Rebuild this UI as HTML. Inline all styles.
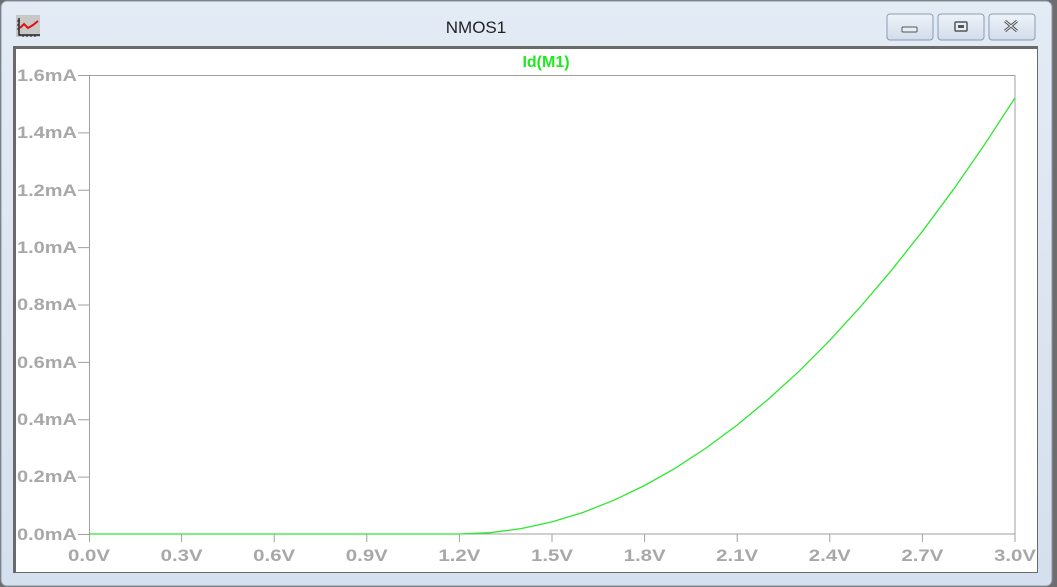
<!DOCTYPE html>
<html><head><meta charset="utf-8"><style>
html,body{margin:0;padding:0;width:1057px;height:587px;overflow:hidden;background:#fff}
</style></head><body>
<svg width="1057" height="587" xmlns="http://www.w3.org/2000/svg" style="display:block">
<defs><linearGradient id="tb" x1="0" y1="0" x2="0" y2="1"><stop offset="0" stop-color="#e3ebf5"/><stop offset="1" stop-color="#d4e0ee"/></linearGradient>
<linearGradient id="bt" x1="0" y1="0" x2="0" y2="1"><stop offset="0" stop-color="#eef3f9"/><stop offset="1" stop-color="#d2dceb"/></linearGradient></defs>
<rect x="0" y="0" width="1057" height="587" fill="#6d6d6d"/>
<rect x="1" y="1" width="1051" height="585" rx="6" fill="url(#tb)" stroke="#8a96a4"/>
<rect x="13" y="46" width="1025" height="527" fill="#6a6a6a"/>
<rect x="16" y="49" width="1021" height="523" fill="#fff"/>
<!-- icon -->
<rect x="16" y="15" width="24" height="22" fill="#c8c8c8"/>
<path d="M19 18v17h21" stroke="#222" stroke-width="1.5" fill="none"/>
<path d="M20 28l4-4 4 4 5-3 5-4" stroke="#e01010" stroke-width="2" fill="none"/>
<path d="M17 21h2M17 25h2M17 29h2M23 35v2M27 35v2M31 35v2M35 35v2" stroke="#222"/>
<text x="476" y="33" font-family="Liberation Sans,sans-serif" font-size="17" fill="#222" text-anchor="middle">NMOS1</text>
<!-- buttons -->
<g stroke="#8b9bb0" fill="url(#bt)">
<rect x="887" y="14" width="46" height="26" rx="3"/><rect x="938" y="14" width="46" height="26" rx="3"/><rect x="989" y="14" width="46" height="26" rx="3"/></g>
<rect x="902" y="27" width="15" height="5" rx="1" fill="#e8eef6" stroke="#555"/>
<rect x="955" y="22" width="12" height="9" rx="1" fill="#e8eef6" stroke="#555" stroke-width="1.5"/>
<rect x="958" y="25" width="6" height="3" fill="#555"/>
<path d="M1005 21l12 10M1017 21l-12 10" stroke="#555" stroke-width="3"/>
<path d="M1005 21l12 10M1017 21l-12 10" stroke="#e8eef6" stroke-width="1"/>
<text x="546" y="67" font-family="Liberation Sans,sans-serif" font-weight="bold" font-size="16" fill="#1ee81e" text-anchor="middle">Id(M1)</text>
<rect x="89.5" y="75.5" width="925.5" height="458.5" fill="none" stroke="#a0a0a0"/>
<g stroke="#a0a0a0">
<path d="M78 75.5h11M78 132.9h11M78 190.3h11M78 247.6h11M78 305h11M78 362.4h11M78 419.8h11M78 477.1h11M78 534.5h11"/>
<path d="M181.6 534v8M274.2 534v8M366.8 534v8M459.4 534v8M552 534v8M644.6 534v8M737.2 534v8M829.8 534v8M922.4 534v8M1015 534v8M89.5 534v8"/>
</g>
<g font-family="Liberation Sans,sans-serif" font-weight="bold" font-size="17" fill="#a8a8a8" lengthAdjust="spacingAndGlyphs">
<text x="17" y="81" textLength="60" lengthAdjust="spacingAndGlyphs">1.6mA</text><text x="17" y="138" textLength="60" lengthAdjust="spacingAndGlyphs">1.4mA</text><text x="17" y="196" textLength="60" lengthAdjust="spacingAndGlyphs">1.2mA</text><text x="17" y="253" textLength="60" lengthAdjust="spacingAndGlyphs">1.0mA</text><text x="17" y="310" textLength="60" lengthAdjust="spacingAndGlyphs">0.8mA</text><text x="17" y="368" textLength="60" lengthAdjust="spacingAndGlyphs">0.6mA</text><text x="17" y="425" textLength="60" lengthAdjust="spacingAndGlyphs">0.4mA</text><text x="17" y="482" textLength="60" lengthAdjust="spacingAndGlyphs">0.2mA</text><text x="17" y="540" textLength="60" lengthAdjust="spacingAndGlyphs">0.0mA</text>
</g>
<g font-family="Liberation Sans,sans-serif" font-weight="bold" font-size="17" fill="#a8a8a8">
<text x="68" y="561" textLength="42" lengthAdjust="spacingAndGlyphs">0.0V</text><text x="160.6" y="561" textLength="42" lengthAdjust="spacingAndGlyphs">0.3V</text><text x="253.2" y="561" textLength="42" lengthAdjust="spacingAndGlyphs">0.6V</text><text x="345.8" y="561" textLength="42" lengthAdjust="spacingAndGlyphs">0.9V</text><text x="438.4" y="561" textLength="42" lengthAdjust="spacingAndGlyphs">1.2V</text><text x="531" y="561" textLength="42" lengthAdjust="spacingAndGlyphs">1.5V</text><text x="623.6" y="561" textLength="42" lengthAdjust="spacingAndGlyphs">1.8V</text><text x="716.2" y="561" textLength="42" lengthAdjust="spacingAndGlyphs">2.1V</text><text x="808.8" y="561" textLength="42" lengthAdjust="spacingAndGlyphs">2.4V</text><text x="901.4" y="561" textLength="42" lengthAdjust="spacingAndGlyphs">2.7V</text><text x="994" y="561" textLength="42" lengthAdjust="spacingAndGlyphs">3.0V</text>
</g>
<polyline fill="none" stroke="#2ee82e" stroke-width="1.3" points="89,534 459.4,534 490.3,532.7 521.1,528.6 552,521.9 582.9,512.5 613.7,500.3 644.6,485.5 675.5,468.1 706.3,447.9 737.2,425 768.1,399.4 799,371.3 829.8,340.3 860.7,306.5 891.5,270.3 922.4,231.3 953.3,189.7 984.1,145.2 1015,97.9"/>
</svg>
</body></html>
